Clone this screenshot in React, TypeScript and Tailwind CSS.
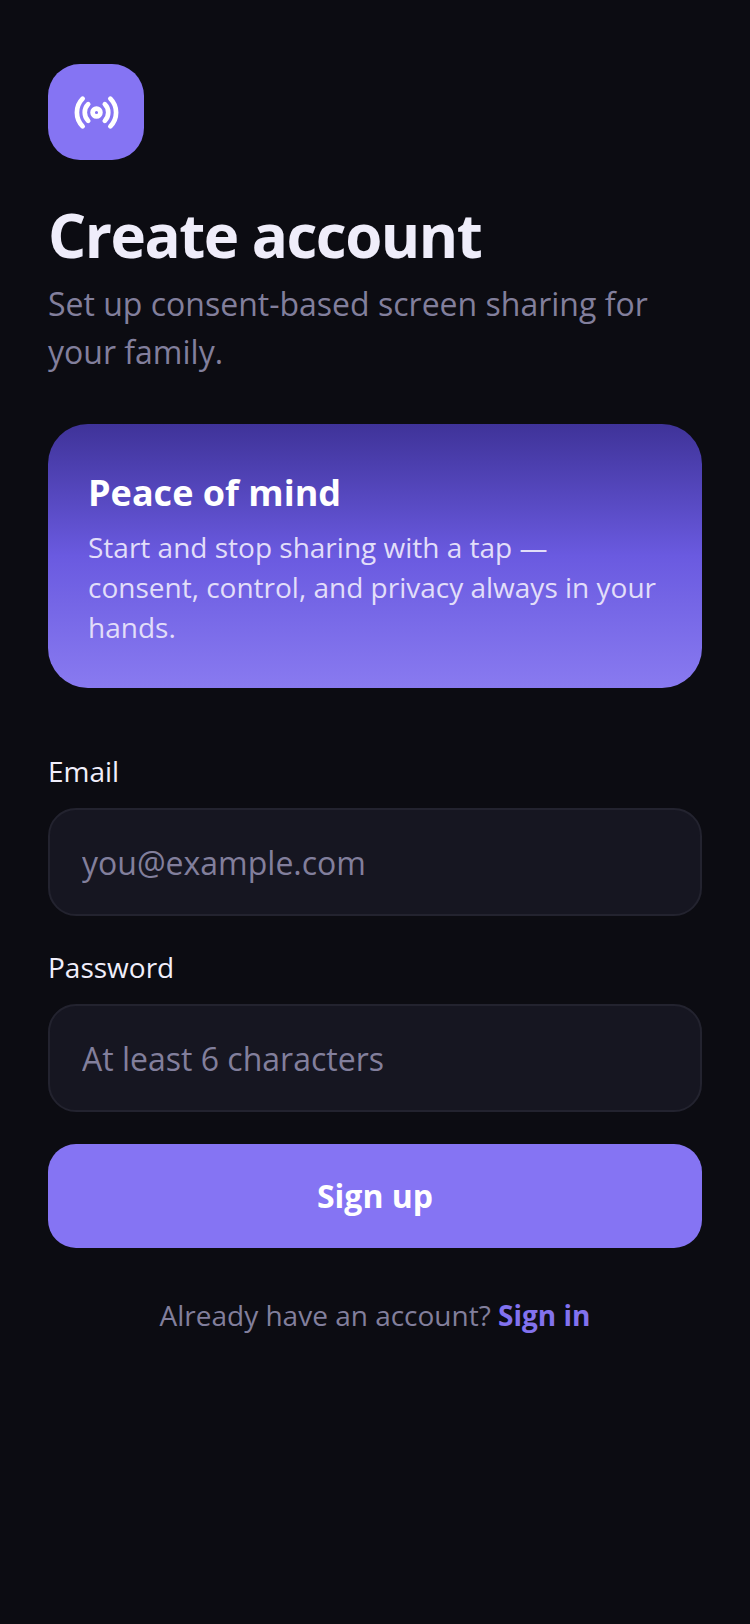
import { Radio } from 'lucide-react';

interface FieldProps {
    label: string;
    type: string;
    placeholder: string;
}

function Field({ label, type, placeholder }: FieldProps) {
    return (
        <label className="block">
            <span className="block text-[28px] leading-[38px] text-[#f1effb]">{label}</span>
            <input
                type={type}
                placeholder={placeholder}
                className="mt-[18px] block h-[108px] w-full rounded-[28px] border-2 border-[#23232f] bg-[#161621] px-[32px] text-[32px] text-[#f1effb] outline-none placeholder:text-[#827f9c]"
            />
        </label>
    );
}

export default function App() {
    return (
        <div className="min-h-[1624px] w-[750px] bg-[#0c0c12] px-[48px] pt-[64px] font-['Open_Sans',sans-serif]">
            {/* Logo */}
            <div className="flex h-[96px] w-[96px] items-center justify-center rounded-[32px] bg-[#8574f3]">
                <Radio className="h-[47px] w-[47px] text-white" strokeWidth={2.4} />
            </div>

            <h1 className="mt-[34px] text-[60px] leading-[82px] font-bold tracking-[-1.5px] text-[#efedfa]">Create account</h1>
            <p className="mt-[4px] text-[32px] leading-[48px] text-[#827f9c]">
                Set up consent-based screen sharing for your family.
            </p>

            {/* Peace of mind card */}
            <div className="mt-[48px] rounded-[40px] bg-gradient-to-b from-[#3f3399] via-[#6a5ae0] to-[#897af0] px-[40px] pt-[44px] pb-[41px]">
                <h2 className="text-[36px] leading-[50px] font-bold text-white">Peace of mind</h2>
                <p className="mt-[9px] text-[28px] leading-[40px] text-[#e2def9]">
                    Start and stop sharing with a tap — consent, control, and privacy always in your hands.
                </p>
            </div>

            {/* Sign up form */}
            <form className="mt-[64px]">
                <Field label="Email" type="email" placeholder="you@example.com" />
                <div className="mt-[32px]">
                    <Field label="Password" type="password" placeholder="At least 6 characters" />
                </div>
                <button
                    type="button"
                    className="mt-[32px] block h-[104px] w-full rounded-[28px] bg-[#8574f3] text-[32px] font-bold text-white"
                >
                    Sign up
                </button>
            </form>

            <p className="mt-[47px] text-center text-[28px] leading-[40px] text-[#827f9c]">
                Already have an account? <span className="font-bold text-[#8272ee]">Sign in</span>
            </p>
        </div>
    );
}
